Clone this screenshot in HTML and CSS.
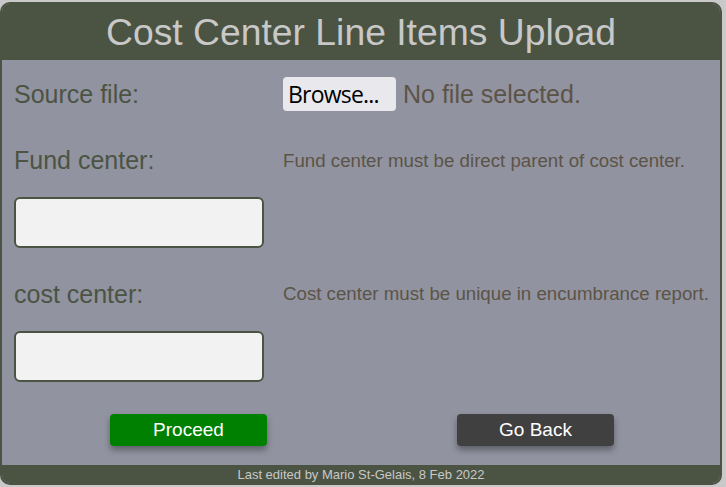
FILE: index.html
```html
<!DOCTYPE html>
<html>
<head>
<meta charset="utf-8">
<link rel="stylesheet" href="styles.css">
</head>
<body>
<div class="panel">
  <div class="header">Cost Center Line Items Upload</div>
  <div class="content">
    <div class="grid">
      <div class="label lbl-source">Source file:</div>
      <div class="file">
        <span class="browse">Browse...</span>
        <span class="nofile">No file selected.</span>
      </div>
      <div class="label lbl-fund">Fund center:</div>
      <div class="hint hint-fund">Fund center must be direct parent of cost center.</div>
      <div class="field"><input class="box" type="text"></div>
      <div></div>
      <div class="label lbl-cost">cost center:</div>
      <div class="hint hint-cost">Cost center must be unique in encumbrance report.</div>
      <div class="field"><input class="box" type="text"></div>
      <div></div>
    </div>
    <div class="actions">
      <button class="btn proceed">Proceed</button>
      <button class="btn back">Go Back</button>
    </div>
  </div>
  <div class="footer">Last edited by Mario St-Gelais, 8 Feb 2022</div>
</div>
</body>
</html>
```
FILE: styles.css
```css
html, body {
  margin: 0;
  padding: 0;
  background: #c9c9c9;
}
body {
  font-family: "Liberation Sans", Arial, sans-serif;
  padding: 2px 4px 2px 0;
}
.panel {
  width: 722px;
  height: 483px;
  box-sizing: border-box;
  border: 2px solid #4b5443;
  border-radius: 10px;
  overflow: hidden;
  background: #9193a0;
  display: flex;
  flex-direction: column;
}
.header {
  height: 58px;
  background: #4b5443;
  color: #c8c8c8;
  font-size: 37.3px;
  line-height: 61px;
  text-align: center;
  margin-top: -2px;
}
.content {
  flex: 1;
  padding: 17px 0 0 12px;
}
.grid {
  display: grid;
  grid-template-columns: 269px 1fr;
  align-items: start;
}
.label {
  font-size: 25px;
  color: #4b5443;
  line-height: 34px;
}
.lbl-source { height: 38px; }
.lbl-fund { margin-top: 28px; height: 54px; }
.lbl-cost { margin-top: 29px; height: 54px; }
.file {
  display: flex;
  align-items: center;
  gap: 7px;
}
.browse {
  font-family: "Open Sans", "Noto Sans", sans-serif;
  font-size: 23px;
  color: #000;
  background: #e9e9ed;
  border-radius: 4px;
  height: 34px;
  line-height: 34px;
  padding: 0 5px;
  box-sizing: border-box;
  width: 113px;
  letter-spacing: -0.8px;
  white-space: nowrap;
}
.nofile {
  font-size: 25px;
  color: #5c5347;
}
.hint {
  font-size: 18.7px;
  color: #5c5347;
  margin-top: 29px;
  line-height: 34px;
}
.field { height: 51px; }
.box {
  width: 250px;
  height: 51px;
  box-sizing: border-box;
  border: 2px solid #4b5443;
  border-radius: 6px;
  background: #f2f2f2;
  margin: 0;
  display: block;
}
.actions {
  display: flex;
  padding-left: 96px;
  gap: 190px;
  margin-top: 32px;
}
.btn {
  width: 157px;
  height: 32px;
  border: none;
  border-radius: 4px;
  color: #fff;
  font-family: "Liberation Sans", Arial, sans-serif;
  font-size: 19px;
  box-shadow: 0 4px 6px rgba(0,0,0,0.35);
}
.proceed { background: #008000; }
.back { background: #404040; }
.footer {
  height: 18px;
  background: #4b5443;
  color: #c8c8c8;
  font-size: 13px;
  line-height: 19px;
  text-align: center;
}
```
